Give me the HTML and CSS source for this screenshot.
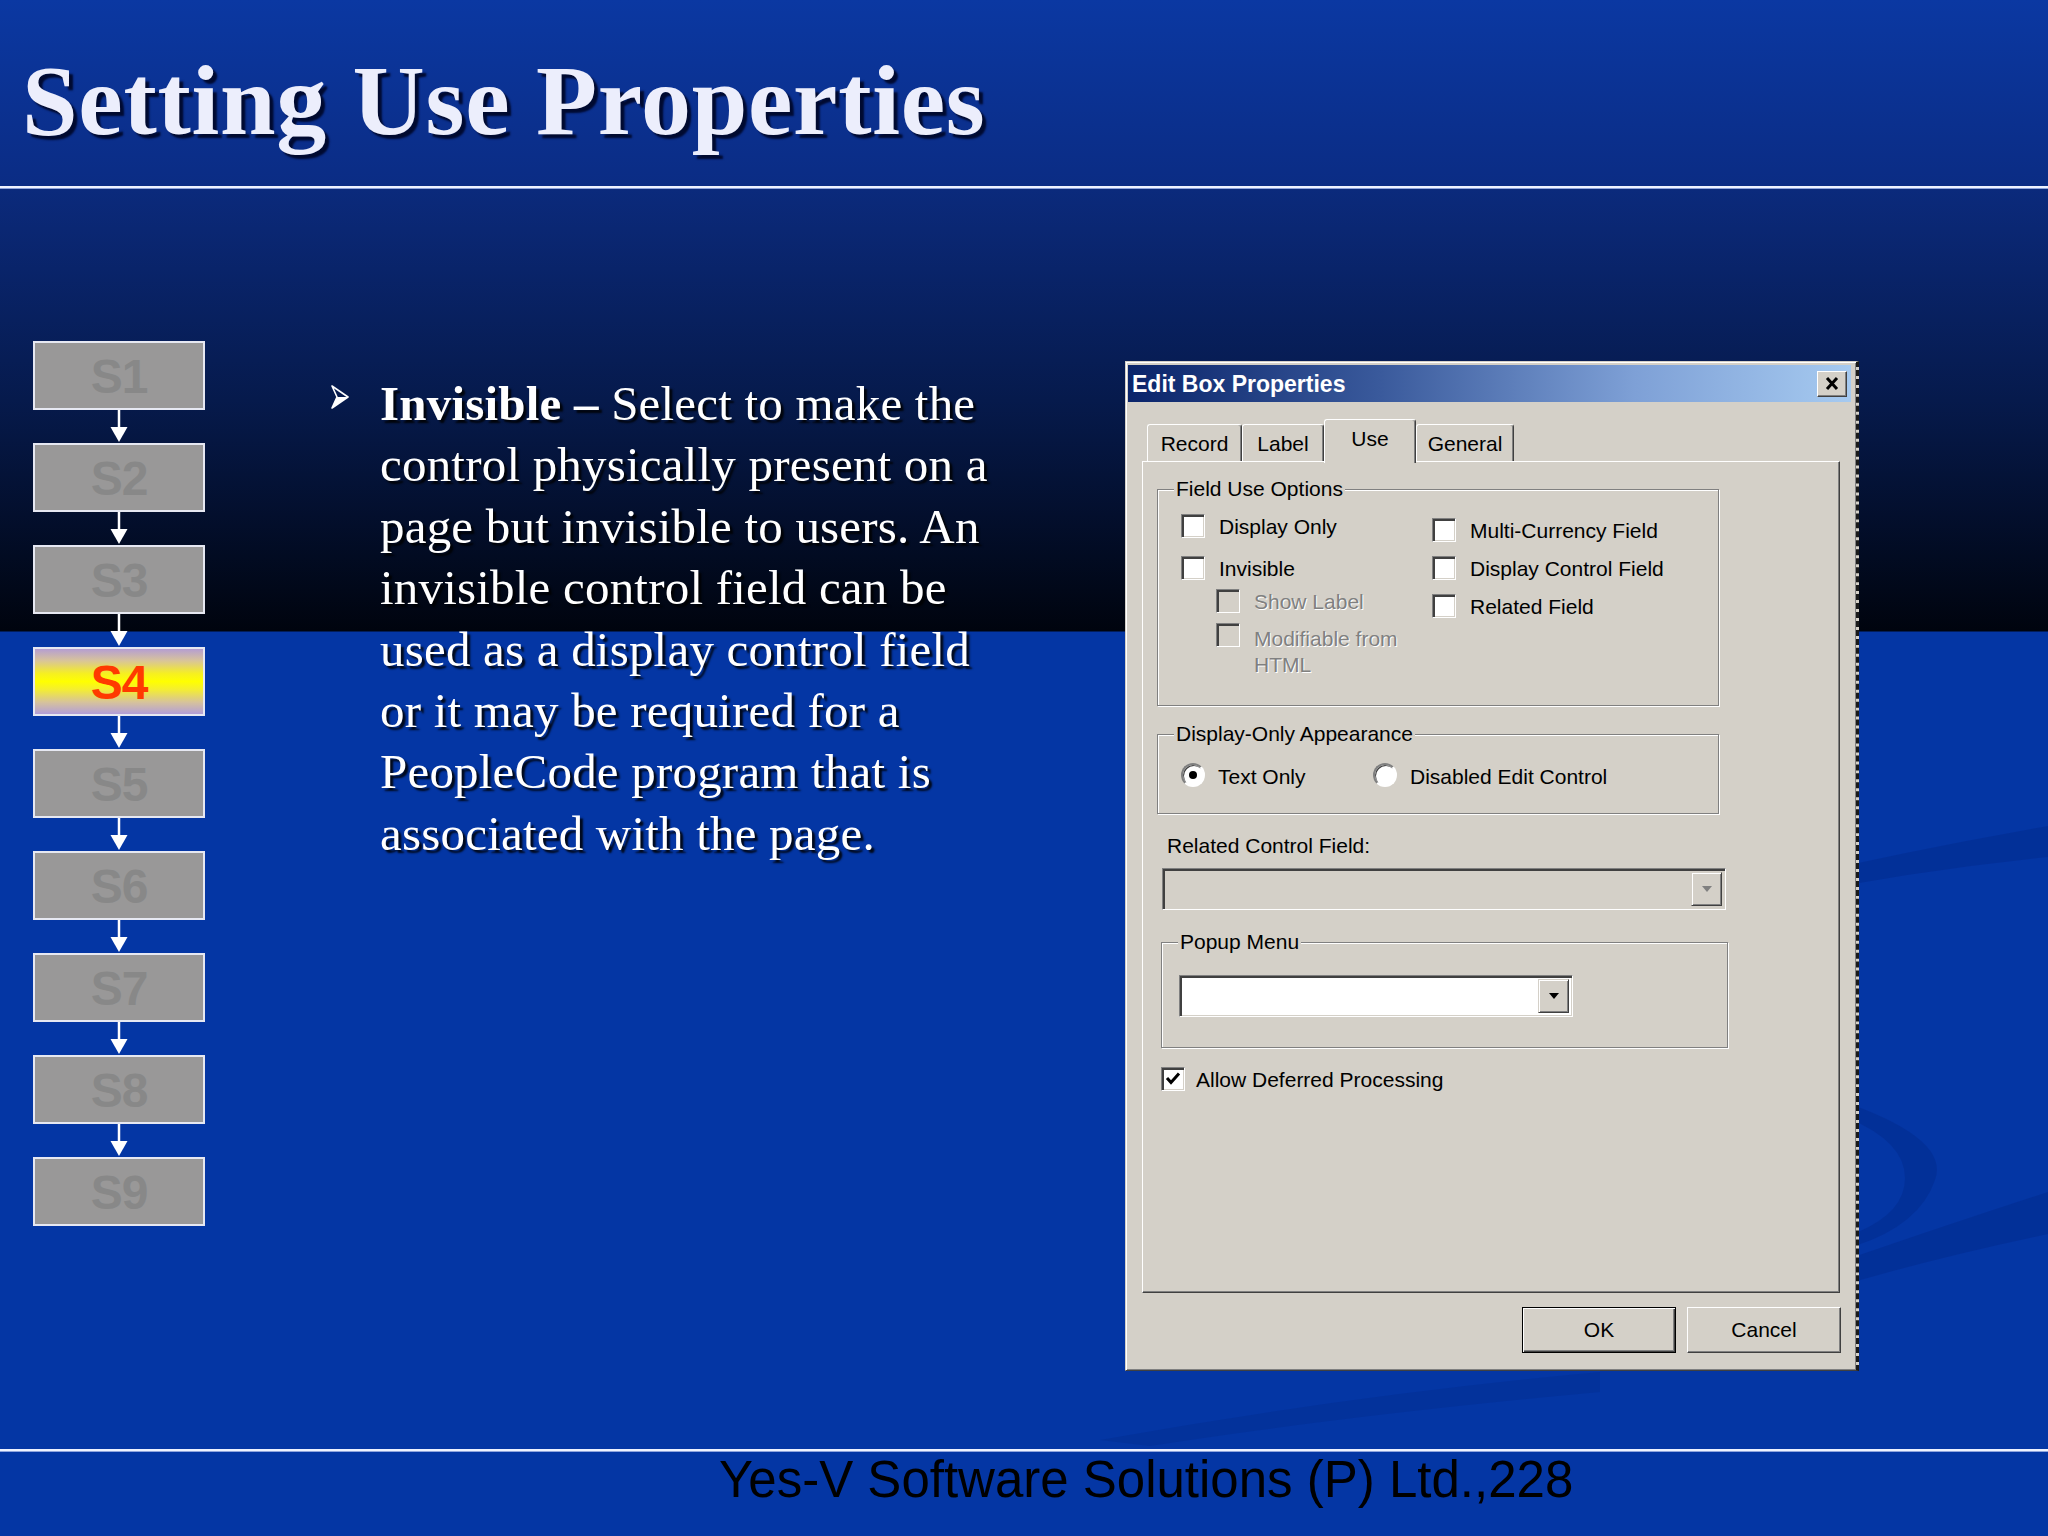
FILE: index.html
```html
<!DOCTYPE html>
<html lang="en">
<head>
<meta charset="utf-8">
<title>Setting Use Properties</title>
<link rel="stylesheet" href="styles.css">
</head>
<body>
<svg class="backdrop" viewBox="0 0 2048 1536" aria-hidden="true">
  <path d="M1760 885 Q1900 852 2048 826 L2048 857 Q1900 872 1760 902 Z" fill="#00227a" opacity="0.28"/>
  <path d="M1850 1104 Q1950 1140 1935 1180 Q1920 1225 1855 1246 L1858 1232 Q1905 1212 1905 1178 Q1905 1142 1848 1118 Z" fill="#00227a" opacity="0.28"/>
  <path d="M1760 1290 Q1900 1240 2048 1192 L2048 1234 Q1900 1265 1760 1310 Z" fill="#00227a" opacity="0.28"/>
  <path d="M1100 1440 Q1350 1395 1600 1372 L1600 1392 Q1350 1415 1150 1446 Z" fill="#00227a" opacity="0.2"/>
</svg>

<header class="slide-head">
  <h1 class="slide-title">Setting Use Properties</h1>
</header>

<main class="slide-body">
  <nav class="steps">
    <div class="step">S1</div>
    <div class="step-arrow"><svg viewBox="0 0 20 33"><path d="M10 0 V18" stroke="#fff" stroke-width="2.5"/><path d="M1.5 17 H18.5 L10 32 Z" fill="#fff"/></svg></div>
    <div class="step">S2</div>
    <div class="step-arrow"><svg viewBox="0 0 20 33"><path d="M10 0 V18" stroke="#fff" stroke-width="2.5"/><path d="M1.5 17 H18.5 L10 32 Z" fill="#fff"/></svg></div>
    <div class="step">S3</div>
    <div class="step-arrow"><svg viewBox="0 0 20 33"><path d="M10 0 V18" stroke="#fff" stroke-width="2.5"/><path d="M1.5 17 H18.5 L10 32 Z" fill="#fff"/></svg></div>
    <div class="step step-current">S4</div>
    <div class="step-arrow"><svg viewBox="0 0 20 33"><path d="M10 0 V18" stroke="#fff" stroke-width="2.5"/><path d="M1.5 17 H18.5 L10 32 Z" fill="#fff"/></svg></div>
    <div class="step">S5</div>
    <div class="step-arrow"><svg viewBox="0 0 20 33"><path d="M10 0 V18" stroke="#fff" stroke-width="2.5"/><path d="M1.5 17 H18.5 L10 32 Z" fill="#fff"/></svg></div>
    <div class="step">S6</div>
    <div class="step-arrow"><svg viewBox="0 0 20 33"><path d="M10 0 V18" stroke="#fff" stroke-width="2.5"/><path d="M1.5 17 H18.5 L10 32 Z" fill="#fff"/></svg></div>
    <div class="step">S7</div>
    <div class="step-arrow"><svg viewBox="0 0 20 33"><path d="M10 0 V18" stroke="#fff" stroke-width="2.5"/><path d="M1.5 17 H18.5 L10 32 Z" fill="#fff"/></svg></div>
    <div class="step">S8</div>
    <div class="step-arrow"><svg viewBox="0 0 20 33"><path d="M10 0 V18" stroke="#fff" stroke-width="2.5"/><path d="M1.5 17 H18.5 L10 32 Z" fill="#fff"/></svg></div>
    <div class="step">S9</div>
  </nav>

  <section class="bullets">
    <div class="bullet-item">
      <svg class="bullet-mark" viewBox="0 0 18 24"><path d="M1 1 L17 12 L1 23 L6 12 Z" fill="none" stroke="#fff" stroke-width="1.6" stroke-linejoin="round"/><path d="M6 12 L17 12 L1 23 Z" fill="#fff"/></svg>
      <p class="bullet-text"><b>Invisible –</b> Select to make the<br>control physically present on a<br>page but invisible to users. An<br>invisible control field can be<br>used as a display control field<br>or it may be required for a<br>PeopleCode program that is<br>associated with the page.</p>
    </div>
  </section>

  <div class="dialog">
    <div class="dlg-title">
      <span class="dlg-title-text">Edit Box Properties</span>
      <span class="dlg-close"><svg viewBox="0 0 28 24"><path d="M9 6 L19 17 M19 6 L9 17" stroke="#000" stroke-width="3"/></svg></span>
    </div>

    <div class="tabs">
      <div class="tab tab-record">Record</div>
      <div class="tab tab-label">Label</div>
      <div class="tab tab-use tab-active">Use</div>
      <div class="tab tab-general">General</div>
    </div>

    <div class="tab-panel">
      <div class="group group-fuo">
        <span class="group-legend">Field Use Options</span>
        <div class="fuo-col fuo-col1">
          <div class="opt opt-r1"><span class="cb"></span><span class="opt-text">Display Only</span></div>
          <div class="opt opt-r2"><span class="cb"></span><span class="opt-text">Invisible</span></div>
          <div class="opt opt-sub opt-r3"><span class="cb cb-disabled"></span><span class="opt-text opt-disabled">Show Label</span></div>
          <div class="opt opt-sub opt-r4"><span class="cb cb-disabled"></span><span class="opt-text opt-disabled opt-multiline">Modifiable from<br>HTML</span></div>
        </div>
        <div class="fuo-col fuo-col2">
          <div class="opt opt-c1"><span class="cb"></span><span class="opt-text">Multi-Currency Field</span></div>
          <div class="opt opt-c2"><span class="cb"></span><span class="opt-text">Display Control Field</span></div>
          <div class="opt opt-c2"><span class="cb"></span><span class="opt-text">Related Field</span></div>
        </div>
      </div>

      <div class="group group-doa">
        <span class="group-legend">Display-Only Appearance</span>
        <div class="radio-item radio-first"><span class="rb rb-on"></span><span class="radio-text">Text Only</span></div>
        <div class="radio-item"><span class="rb"></span><span class="radio-text">Disabled Edit Control</span></div>
      </div>

      <div class="rcf-label">Related Control Field:</div>
      <div class="combo combo-disabled">
        <span class="combo-btn"><svg viewBox="0 0 12 8"><path d="M1 1 H11 L6 7 Z" fill="#808080"/></svg></span>
      </div>

      <div class="group group-popup">
        <span class="group-legend">Popup Menu</span>
        <div class="combo combo-popup">
          <span class="combo-btn"><svg viewBox="0 0 12 8"><path d="M1 1 H11 L6 7 Z" fill="#000"/></svg></span>
        </div>
      </div>

      <div class="opt opt-allow"><span class="cb cb-checked"><svg viewBox="0 0 18 18"><path d="M3 8 L7 12.5 L15 3.5" stroke="#000" stroke-width="3" fill="none"/></svg></span><span class="opt-text">Allow Deferred Processing</span></div>
    </div>

    <div class="dlg-buttons">
      <div class="btn btn-default">OK</div>
      <div class="btn">Cancel</div>
    </div>
  </div>
</main>

<footer class="slide-foot">
  <span class="foot-text">Yes-V Software Solutions (P) Ltd.,228</span>
</footer>
</body>
</html>
```
FILE: styles.css
```css
* { box-sizing: border-box; }

html, body { margin: 0; padding: 0; }

body {
  width: 2048px;
  height: 1536px;
  overflow: hidden;
  position: relative;
  display: flex;
  flex-direction: column;
  font-family: "Liberation Serif", "Times New Roman", serif;
  background: linear-gradient(to bottom,
    #0b38a2 0px, #0b2c84 186px, #0b2a7c 189px,
    #061a4c 400px, #00040e 631px,
    #0436a4 632px, #0436a4 1536px);
}

.backdrop {
  position: absolute;
  left: 0;
  top: 0;
  width: 2048px;
  height: 1536px;
  z-index: 0;
  pointer-events: none;
}

/* ---------- header ---------- */
.slide-head {
  position: relative;
  z-index: 1;
  flex: 0 0 188px;
  border-bottom: 2px solid #eef2ff;
  box-shadow: 0 1px 0 #8fa4dc;
  padding: 51px 0 0 22px;
}

.slide-title {
  margin: 0;
  font: bold 100px/100px "Liberation Serif", "Times New Roman", serif;
  letter-spacing: 0.7px;
  color: #eceefc;
  text-shadow: 4px 4px 2px #000a30;
  white-space: nowrap;
}

/* ---------- body ---------- */
.slide-body {
  position: relative;
  z-index: 1;
  flex: 1 1 auto;
  display: flex;
  align-items: flex-start;
}

/* sidebar steps */
.steps {
  flex: 0 0 172px;
  margin: 153px 0 0 33px;
  display: flex;
  flex-direction: column;
  align-items: center;
}

.step {
  width: 172px;
  height: 69px;
  border: 2px solid #e6e8f2;
  background: #999898;
  color: #888888;
  font: bold 48px/1 "Liberation Sans", Arial, sans-serif;
  letter-spacing: -1px;
  display: flex;
  align-items: center;
  justify-content: center;
  padding-top: 3px;
}

.step-current {
  background: linear-gradient(to bottom,
    #b59ed2 0%, #d8c49a 18%, #f6f020 38%, #ffff00 50%,
    #f4ee30 62%, #d6c29c 82%, #b29ed8 100%);
  color: #ff3a00;
}

.step-arrow {
  width: 20px;
  height: 33px;
  display: flex;
}

.step-arrow svg {
  width: 20px;
  height: 33px;
  display: block;
}

/* bullet text */
.bullets {
  flex: 0 0 794px;
  margin: 185px 0 0 126px;
}

.bullet-item {
  display: flex;
  align-items: flex-start;
}

.bullet-mark {
  flex: 0 0 18px;
  width: 18px;
  height: 24px;
  margin: 12px 31px 0 0;
}

.bullet-text {
  margin: 0;
  font: 49px/61.4px "Liberation Serif", "Times New Roman", serif;
  letter-spacing: 0.2px;
  color: #ffffff;
  text-shadow: 3px 3px 2px rgba(0, 0, 0, 0.85);
  white-space: nowrap;
}

.bullet-text b { font-weight: bold; }

/* ---------- dialog ---------- */
.dialog {
  flex: 0 0 734px;
  width: 734px;
  margin-top: 173px;
  background: #d4d0c8;
  border: 1px solid;
  border-color: #d4d0c8 #303030 #404040 #d4d0c8;
  border-right: 3px dashed #1a1a1a;
  box-shadow: inset 1px 1px 0 #ffffff, inset -1px -1px 0 #808080;
  padding: 3px 5px 17px 2px;
  font: 21px/24px "Liberation Sans", Arial, sans-serif;
  color: #000;
}

.dlg-title {
  height: 37px;
  background: linear-gradient(to right, #0a246a 0%, #3a5a9c 35%, #7ea0d6 70%, #a6caf0 100%);
  display: flex;
  align-items: center;
  justify-content: space-between;
  padding: 0 4px 0 4px;
}

.dlg-title-text {
  font: bold 23px/26px "Liberation Sans", Arial, sans-serif;
  color: #ffffff;
  white-space: nowrap;
}

.dlg-close {
  width: 30px;
  height: 26px;
  background: #d4d0c8;
  border: 1px solid;
  border-color: #ffffff #404040 #404040 #ffffff;
  box-shadow: inset -1px -1px 0 #808080;
  display: flex;
  margin-top: 1px;
}

.dlg-close svg { width: 28px; height: 24px; display: block; }

/* tabs */
.tabs {
  height: 42px;
  margin: 17px 0 0 19px;
  display: flex;
  align-items: flex-end;
}

.tab {
  height: 37px;
  padding-top: 7px;
  text-align: center;
  border-top: 1px solid #ffffff;
  border-left: 1px solid #ffffff;
  border-right: 1px solid #404040;
  box-shadow: inset -1px 0 0 #808080;
  border-radius: 3px 3px 0 0;
  background: #d4d0c8;
  white-space: nowrap;
}

.tab-record { width: 95px; }
.tab-label { width: 82px; }
.tab-use { width: 92px; }
.tab-general { width: 98px; }

.tab-active {
  position: relative;
  z-index: 2;
  height: 44px;
  margin-bottom: -2px;
  padding-top: 7px;
}

.tab-panel {
  width: 698px;
  height: 832px;
  margin-left: 14px;
  border: 1px solid;
  border-color: #ffffff #404040 #404040 #ffffff;
  box-shadow: inset -1px -1px 0 #808080;
  display: flex;
  flex-direction: column;
  align-items: flex-start;
}

/* group boxes */
.group {
  position: relative;
  border: 1px solid #808080;
  box-shadow: inset 1px 1px 0 #ffffff, 1px 1px 0 #ffffff;
}

.group-legend {
  position: absolute;
  top: -13px;
  left: 16px;
  padding: 0 2px;
  background: #d4d0c8;
  line-height: 24px;
  white-space: nowrap;
}

.group-fuo {
  width: 562px;
  height: 217px;
  margin: 27px 0 0 14px;
  padding: 24px 0 0 23px;
  display: flex;
  align-items: flex-start;
}

.fuo-col {
  display: flex;
  flex-direction: column;
  align-items: flex-start;
}

.fuo-col1 { width: 251px; }

.opt {
  display: flex;
  align-items: flex-start;
  white-space: nowrap;
}

.opt-text {
  line-height: 24px;
  margin-left: 14px;
  padding-top: 1px;
}

.opt-r2 { margin-top: 17px; }
.opt-r3 { margin-top: 8px; }
.opt-r4 { margin-top: 9px; }
.opt-sub { margin-left: 35px; }
.opt-c1 { margin-top: 4px; }
.opt-c2 { margin-top: 13px; }

.opt-disabled {
  color: #808080;
  text-shadow: 1px 1px 0 #ffffff;
}

.opt-multiline {
  line-height: 26px;
  padding-top: 3px;
}

.cb {
  flex: 0 0 24px;
  width: 24px;
  height: 24px;
  background: #ffffff;
  border: 1px solid;
  border-color: #808080 #ffffff #ffffff #808080;
  box-shadow: inset 1px 1px 0 #404040, inset 2px 2px 0 #404040, inset -1px -1px 0 #d4d0c8;
  display: flex;
  align-items: center;
  justify-content: center;
}

.cb-disabled { background: #d4d0c8; }

.cb svg { width: 18px; height: 18px; display: block; }

/* radios */
.group-doa {
  width: 562px;
  height: 80px;
  margin: 28px 0 0 14px;
  padding: 28px 0 0 23px;
  display: flex;
  align-items: flex-start;
}

.radio-item {
  display: flex;
  align-items: flex-start;
  white-space: nowrap;
}

.radio-first { width: 192px; }

.rb {
  flex: 0 0 24px;
  width: 24px;
  height: 24px;
  border-radius: 50%;
  background: #ffffff;
  border: 2px solid;
  border-color: #808080 #ffffff #ffffff #808080;
  box-shadow: inset 1px 1px 0 #404040;
  display: flex;
  align-items: center;
  justify-content: center;
}

.rb-on::after {
  content: "";
  width: 8px;
  height: 8px;
  border-radius: 50%;
  background: #000000;
}

.radio-text {
  margin-left: 13px;
  line-height: 24px;
  padding-top: 2px;
}

/* related control field */
.rcf-label {
  margin: 20px 0 0 24px;
  line-height: 24px;
}

.combo {
  height: 42px;
  border: 1px solid;
  border-color: #808080 #ffffff #ffffff #808080;
  box-shadow: inset 1px 1px 0 #404040, inset 2px 2px 0 #404040, inset -1px -1px 0 #d4d0c8;
  padding: 3px 3px 3px 2px;
  display: flex;
  justify-content: flex-end;
}

.combo-disabled {
  width: 564px;
  margin: 10px 0 0 19px;
  background: #d4d0c8;
}

.combo-popup {
  width: 394px;
  background: #ffffff;
}

.combo-btn {
  width: 31px;
  height: 34px;
  background: #d4d0c8;
  border: 1px solid;
  border-color: #d4d0c8 #404040 #404040 #d4d0c8;
  box-shadow: inset 1px 1px 0 #ffffff, inset -1px -1px 0 #808080;
  display: flex;
  align-items: center;
  justify-content: center;
}

.combo-btn svg { width: 12px; height: 8px; display: block; }

.group-popup {
  width: 567px;
  height: 106px;
  margin: 32px 0 0 18px;
  padding: 32px 0 0 17px;
}

.opt-allow {
  margin: 19px 0 0 18px;
}

.opt-allow .opt-text { margin-left: 11px; }

/* buttons */
.dlg-buttons {
  width: 713px;
  margin-top: 14px;
  display: flex;
  justify-content: flex-end;
  gap: 11px;
}

.btn {
  width: 154px;
  height: 46px;
  display: flex;
  align-items: center;
  justify-content: center;
  border: 1px solid;
  border-color: #ffffff #404040 #404040 #ffffff;
  box-shadow: inset -1px -1px 0 #808080;
}

.btn-default {
  border-color: #000000;
  box-shadow: inset 1px 1px 0 #ffffff, inset -1px -1px 0 #404040, inset -2px -2px 0 #808080;
}

/* ---------- footer ---------- */
.slide-foot {
  position: relative;
  z-index: 1;
  flex: 0 0 87px;
  border-top: 2px solid #eef2ff;
  box-shadow: inset 0 1px 0 #8fa4dc;
  padding-left: 719px;
}

.foot-text {
  font: 51px/57px "Liberation Sans", Arial, sans-serif;
  color: #000000;
  white-space: nowrap;
}
```
